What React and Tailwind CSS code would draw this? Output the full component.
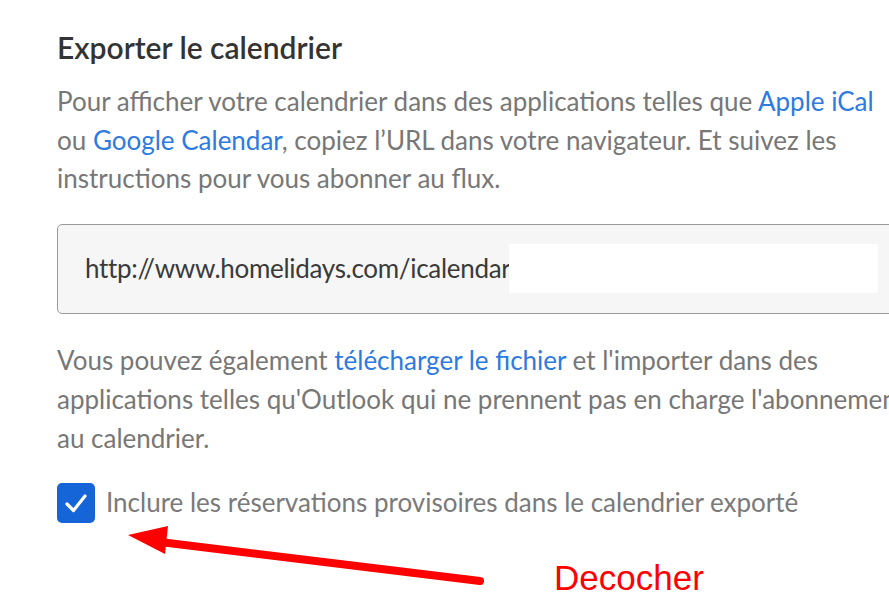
import React from "react";

export default function App() {
  return (
    <div className="relative w-[889px] h-[615px] overflow-hidden bg-white" style={{ fontFamily: "Lato, 'Open Sans', sans-serif" }}>
      <div className="pl-[57px] pt-[29px]">
        <h2 className="text-[30px] leading-[36px] font-semibold text-[#333333] whitespace-nowrap">Exporter le calendrier</h2>
        <p className="mt-[17px] text-[26px] leading-[38.5px] text-[#777777] whitespace-nowrap">
          Pour afficher votre calendrier dans des applications telles que <span className="text-[#2d7be0]">Apple iCal</span>
          <br />ou <span className="text-[#2d7be0]">Google Calendar</span>, copiez l’URL dans votre navigateur. Et suivez les
          <br />instructions pour vous abonner au flux.
        </p>
        <div className="mt-[26px] w-[860px] h-[90px] rounded-[5px] border-[1.5px] border-[#9a9a9a] bg-[#f6f6f6] flex items-center pl-[27px]">
          <span className="text-[26px] text-[#3a3a3a] tracking-[-0.3px] whitespace-nowrap">http://www.homelidays.com/icalendar</span>
          <div className="-ml-[2px] w-[369px] h-[49px] bg-white rounded-[2px]" />
        </div>
        <p className="mt-[27px] text-[26px] leading-[39px] text-[#777777] whitespace-nowrap">
          Vous pouvez également <span className="text-[#2d7be0]">télécharger le fichier</span> et l'importer dans des
          <br />applications telles qu'Outlook qui ne prennent pas en charge l'abonnement
          <br />au calendrier.
        </p>
        <div className="mt-[25px] flex items-center gap-[11px]">
          <div className="w-[38px] h-[40px] rounded-[5px] bg-[#1565d8] flex items-center justify-center shrink-0">
            <svg width="24" height="22" viewBox="0 0 24 22" fill="none">
              <path d="M3 12 L9.5 18.5 L21 4" stroke="white" strokeWidth="3.2" strokeLinecap="round" strokeLinejoin="round" />
            </svg>
          </div>
          <span className="text-[26px] text-[#7a7a7a] whitespace-nowrap">Inclure les réservations provisoires dans le calendrier exporté</span>
        </div>
      </div>
      <svg className="absolute left-0 top-0" width="889" height="615" viewBox="0 0 889 615">
        <line x1="160" y1="542" x2="480" y2="581" stroke="#ff0000" strokeWidth="8" strokeLinecap="round" />
        <polygon points="128,535 168,526 165,554" fill="#ff0000" />
      </svg>
      <div className="absolute left-[554px] top-[556px] text-[35px] leading-[44px] text-[#ff0000]" style={{ fontFamily: "'Liberation Sans', Arial, sans-serif" }}>Decocher</div>
    </div>
  );
}
